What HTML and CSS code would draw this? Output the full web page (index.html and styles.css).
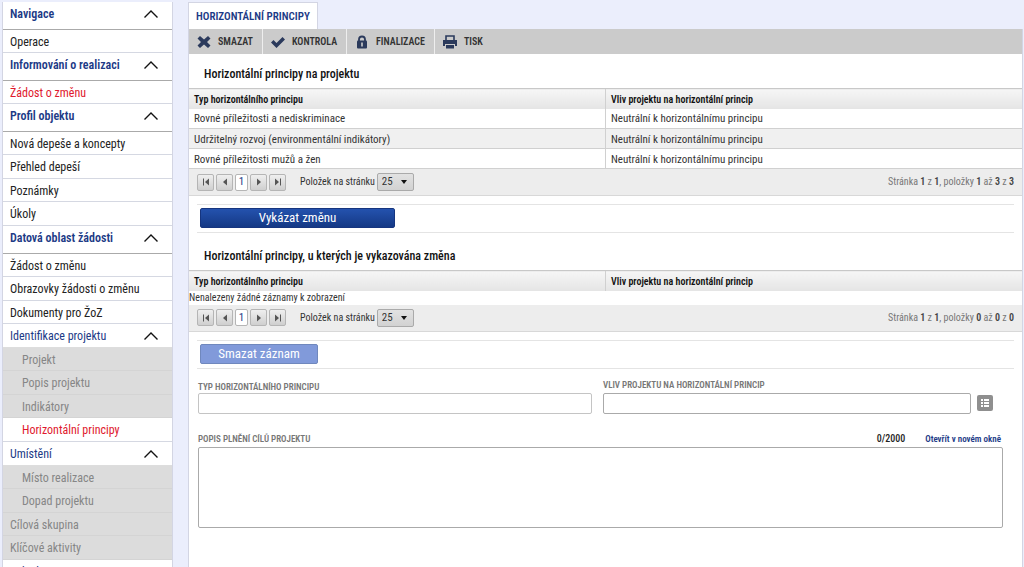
FILE: index.html
```html
<!DOCTYPE html>
<html lang="cs">
<head>
<meta charset="utf-8">
<title>Horizontální principy</title>
<link rel="stylesheet" href="styles.css">
</head>
<body>
<svg class="defs" aria-hidden="true">
  <symbol id="chev" viewBox="0 0 16 10"><path d="M1.500 8.500L8 2l6.500 6.500" fill="none" stroke="#111" stroke-width="1.400"/></symbol>
  <symbol id="first" viewBox="0 0 10 10"><path d="M2 1.500h1v7H2zM8 1.500v7L4 5z" fill="#555"/></symbol>
  <symbol id="prev" viewBox="0 0 10 10"><path d="M7 1.500v7L3 5z" fill="#555"/></symbol>
  <symbol id="next" viewBox="0 0 10 10"><path d="M3 1.500v7L7 5z" fill="#555"/></symbol>
  <symbol id="last" viewBox="0 0 10 10"><path d="M7 1.500h1v7H7zM2 1.500v7L6 5z" fill="#555"/></symbol>
</svg>
<div class="app">
  <nav class="side" aria-label="Navigace">
    <button class="group">Navigace<svg><use href="#chev"/></svg></button>
    <ul class="list"><li><a href="#">Operace</a></li></ul>
    <button class="group">Informování o realizaci<svg><use href="#chev"/></svg></button>
    <ul class="list"><li><a href="#" class="active">Žádost o změnu</a></li></ul>
    <button class="group">Profil objektu<svg><use href="#chev"/></svg></button>
    <ul class="list">
      <li><a href="#">Nová depeše a koncepty</a></li>
      <li><a href="#">Přehled depeší</a></li>
      <li><a href="#">Poznámky</a></li>
      <li><a href="#">Úkoly</a></li>
    </ul>
    <button class="group">Datová oblast žádosti<svg><use href="#chev"/></svg></button>
    <ul class="list">
      <li><a href="#">Žádost o změnu</a></li>
      <li><a href="#">Obrazovky žádosti o změnu</a></li>
      <li><a href="#">Dokumenty pro ŽoZ</a></li>
    </ul>
    <button class="group sub">Identifikace projektu<svg><use href="#chev"/></svg></button>
    <ul class="list nested">
      <li class="off"><a href="#">Projekt</a></li>
      <li class="off"><a href="#">Popis projektu</a></li>
      <li class="off"><a href="#">Indikátory</a></li>
      <li><a href="#" class="active">Horizontální principy</a></li>
    </ul>
    <button class="group sub">Umístění<svg><use href="#chev"/></svg></button>
    <ul class="list nested">
      <li class="off"><a href="#">Místo realizace</a></li>
      <li class="off"><a href="#">Dopad projektu</a></li>
    </ul>
    <ul class="list">
      <li class="off"><a href="#">Cílová skupina</a></li>
      <li class="off"><a href="#">Klíčové aktivity</a></li>
    </ul>
    <button class="group sub">Subjekty</button>
  </nav>

  <main class="main">
    <h1 class="tab">HORIZONTÁLNÍ PRINCIPY</h1>
    <div class="panel">
      <div class="toolbar">
        <button><svg viewBox="0 0 14 14"><path d="M3 1l4 3.500L11 1l2.500 2.500L10 7l3.500 3.500L11 13 7 9.500 3 13 .5 10.500 4 7 .5 3.500z" fill="#2b3a5c"/></svg>SMAZAT</button>
        <button><svg viewBox="0 0 14 14"><path d="M0 7.500L2.500 5 5.500 8l6-6L14 4.500 5.500 13z" fill="#2b3a5c"/></svg>KONTROLA</button>
        <button><svg viewBox="0 0 14 14"><path d="M4 6V4.500a3 3 0 0 1 6 0V6" fill="none" stroke="#2b3a5c" stroke-width="1.800"/><rect x="2" y="5.500" width="10" height="8" rx="1" fill="#2b3a5c"/><path d="M6.200 7.500h1.600v4H6.200z" fill="#ccc"/></svg>FINALIZACE</button>
        <button><svg viewBox="0 0 14 14"><path d="M3 5V1h8v4" fill="none" stroke="#2b3a5c" stroke-width="1.600"/><path d="M0 5h14v6h-2V9H2v2H0zM3 10h8v3.500H3z" fill="#2b3a5c"/></svg>TISK</button>
      </div>

      <h2 class="title">Horizontální principy na projektu</h2>
      <table class="grid">
        <thead><tr><th>Typ horizontálního principu</th><th>Vliv projektu na horizontální princip</th></tr></thead>
        <tbody>
          <tr><td>Rovné příležitosti a nediskriminace</td><td>Neutrální k horizontálnímu principu</td></tr>
          <tr><td>Udržitelný rozvoj (environmentální indikátory)</td><td>Neutrální k horizontálnímu principu</td></tr>
          <tr><td>Rovné příležitosti mužů a žen</td><td>Neutrální k horizontálnímu principu</td></tr>
        </tbody>
      </table>
      <div class="pager">
        <button aria-label="První"><svg><use href="#first"/></svg></button>
        <button aria-label="Předchozí"><svg><use href="#prev"/></svg></button>
        <button class="page">1</button>
        <button aria-label="Další"><svg><use href="#next"/></svg></button>
        <button aria-label="Poslední"><svg><use href="#last"/></svg></button>
        <label for="size1">Položek na stránku</label>
        <span class="select"><select id="size1"><option>25</option></select></span>
        <p>Stránka <b>1</b> z <b>1</b>, položky <b>1</b> až <b>3</b> z <b>3</b></p>
      </div>
      <div class="actions"><button class="wide">Vykázat změnu</button></div>

      <h2 class="title">Horizontální principy, u kterých je vykazována změna</h2>
      <table class="grid">
        <thead><tr><th>Typ horizontálního principu</th><th>Vliv projektu na horizontální princip</th></tr></thead>
        <tbody><tr><td class="empty" colspan="2">Nenalezeny žádné záznamy k zobrazení</td></tr></tbody>
      </table>
      <div class="pager">
        <button aria-label="První"><svg><use href="#first"/></svg></button>
        <button aria-label="Předchozí"><svg><use href="#prev"/></svg></button>
        <button class="page">1</button>
        <button aria-label="Další"><svg><use href="#next"/></svg></button>
        <button aria-label="Poslední"><svg><use href="#last"/></svg></button>
        <label for="size2">Položek na stránku</label>
        <span class="select"><select id="size2"><option>25</option></select></span>
        <p>Stránka <b>1</b> z <b>1</b>, položky <b>0</b> až <b>0</b> z <b>0</b></p>
      </div>
      <div class="actions"><button class="soft">Smazat záznam</button></div>

      <form class="form">
        <div class="fields">
          <div class="field first"><label for="typ">TYP HORIZONTÁLNÍHO PRINCIPU</label><input class="readonly" id="typ" type="text" readonly></div>
          <div class="field second"><label for="vliv">VLIV PROJEKTU NA HORIZONTÁLNÍ PRINCIP</label>
            <div class="combo"><input id="vliv" type="text"><button class="pick" type="button" aria-label="Vybrat"><svg viewBox="0 0 16 16"><path d="M4 4h2v2H4zM7 4h5v2H7zM4 7h2v2H4zM7 7h5v2H7zM4 10h2v2H4zM7 10h5v2H7z" fill="#fff"/></svg></button></div>
          </div>
        </div>
        <div class="caption"><label for="popis">POPIS PLNĚNÍ CÍLŮ PROJEKTU</label><span>0/2000</span><a href="#">Otevřít v novém okně</a></div>
        <textarea id="popis"></textarea>
      </form>
    </div>
  </main>
</div>
</body>
</html>
```
FILE: styles.css
```css
* { box-sizing: border-box; }
html, body { height: 100%; }
body {
  margin: 0;
  overflow: hidden;
  background: #ebeefc;
  color: #222;
  font: 12px/16px "Roboto Condensed", "Liberation Sans Narrow", Roboto, sans-serif;
}
button, input, select, textarea { font: inherit; color: inherit; margin: 0; }
a { color: inherit; text-decoration: none; }
h1, h2, p, ul { margin: 0; padding: 0; }
.defs { position: absolute; width: 0; height: 0; }

.app { display: flex; gap: 15px; min-height: 100%; padding: 2px 1px 0 2px; }

/* Sidebar */
.side { flex: 0 0 171px; background: #fff; border: solid #d3d5e3; border-width: 0 1px; }
.group {
  display: flex;
  align-items: center;
  justify-content: space-between;
  width: 100%;
  height: 28px;
  padding: 0 13px 3px 7px;
  border: 0;
  border-bottom: 1px solid #aaa;
  background: #fff;
  color: #1c3a86;
  font-size: 12px;
  font-weight: 600;
}
.group svg { width: 16px; height: 10px; }
.group.sub { height: 24px; padding-bottom: 0; border-bottom-color: #ddd; font-weight: 400; }
.list { list-style: none; }
.list li { height: 23px; border-bottom: 1px solid #d5d8e2; }
.list li:nth-child(even) { height: 24px; }
.list a { display: block; padding: 0 7px; line-height: 24px; }
.nested a { padding-left: 19px; }
.list .off { background: #dcdcdc; border-color: #d4d4d4; color: #868686; }
.list .active { color: #e0182d; }

/* Main panel */
.main { flex: 1; display: flex; flex-direction: column; align-items: flex-start; min-width: 0; }
.tab {
  padding: 6px 7px 4px;
  border: 1px solid #d3d5e3;
  border-bottom: 0;
  background: #fff;
  color: #1c3a86;
  font-size: 11px;
  line-height: 16px;
  font-weight: 600;
}
.panel { flex: 1; width: 100%; background: #fff; border: solid #d3d5e3; border-width: 0 1px; }

.toolbar { display: flex; background: #cbcbcb; }
.toolbar button {
  display: flex;
  align-items: center;
  gap: 7px;
  height: 25px;
  padding: 0 9px 0 8px;
  border: 0;
  border-right: 1px solid #eee;
  background: none;
  color: #333;
  font-size: 10px;
  font-weight: 600;
}
.toolbar button:last-child { border: 0; }
.toolbar svg { width: 14px; height: 14px; }

.title { padding: 12px 15px 6px; color: #111; font-size: 12px; line-height: 16px; font-weight: 500; }

.grid { width: 100%; table-layout: fixed; border-collapse: collapse; }
.grid th {
  height: 20px;
  padding: 2px 5px 0;
  border-top: 1px solid #c8c8c8;
  background: linear-gradient(#f6f6f6, #e4e4e4);
  color: #111;
  font-size: 10px;
  font-weight: 600;
  text-align: left;
}
.grid td { height: 20px; padding: 2px 5px 0; border-bottom: 1px solid #d0d0d0; color: #333; font-size: 11px; }
.grid th + th, .grid td + td { border-left: 1px solid #d0d0d0; }
.grid tr:nth-child(even) td { background: #f0f0f0; }
.grid .empty { height: 14px; padding: 0; border: 0; font-size: 10px; line-height: 14px; }

.pager {
  display: flex;
  align-items: center;
  gap: 2px;
  height: 27px;
  padding: 0 8px;
  border-bottom: 1px solid #d8d8d8;
  background: #ededed;
  color: #333;
  font-size: 10px;
}
.pager button {
  display: flex;
  align-items: center;
  justify-content: center;
  width: 17px;
  height: 17px;
  padding: 0;
  border: 1px solid #b5b5b5;
  border-radius: 2px;
  background: linear-gradient(#efefef, #cfcfcf);
}
.pager .page { width: 13px; background: #fff; color: #1c3a86; font-size: 11px; }
.pager svg { width: 10px; height: 10px; }
.pager label { margin-left: 12px; }
.pager p { margin-left: auto; color: #777; }
.pager b { color: #444; font-weight: 600; }
.select { position: relative; display: flex; }
.select select {
  appearance: none;
  width: 37px;
  height: 18px;
  padding: 0 4px;
  border: 1px solid #aaa;
  border-radius: 2px;
  background: linear-gradient(#e2e2e2, #d2d2d2);
  font-size: 11px;
  line-height: 16px;
}
.select::after {
  content: "";
  position: absolute;
  top: 7px;
  right: 7px;
  border: solid transparent;
  border-width: 4px 3px 0;
  border-top-color: #111;
  pointer-events: none;
}

.actions { margin: 8px 8px 3px; padding: 3px 3px 4px; border: solid #e4e4e4; border-width: 1px 0; }
.actions button {
  display: block;
  height: 20px;
  padding: 0;
  border: 1px solid #16357f;
  border-radius: 2px;
  background: linear-gradient(#2452ae, #153985);
  color: #fff;
  font-size: 13px;
  line-height: 18px;
}
.actions .wide { width: 195px; }
.actions .soft { width: 118px; border-color: #7088bd; background: #819ada; }

/* Form */
.form { padding: 7px 19px 0 9px; color: #777; font-size: 9px; line-height: 12px; font-weight: 600; }
.fields { display: flex; align-items: flex-end; gap: 11px; }
.field label { display: block; }
.field input { width: 100%; height: 21px; border: 1px solid #aaa; border-radius: 2px; background: #fff; }
.field .readonly { border-color: #c4c4c4; }
.first { flex: 394; }
.second { flex: 400; }
.second label { margin-bottom: 2px; }
.combo { display: flex; align-items: center; gap: 6px; padding-right: 10px; }
.combo input { flex: 1; min-width: 0; }
.pick { width: 16px; height: 16px; padding: 0; border: 0; border-radius: 2px; background: #8f8f8f; }
.pick svg { display: block; width: 16px; height: 16px; }
.caption { display: flex; align-items: center; margin-top: 19px; padding-right: 2px; }
.caption span { margin-left: auto; color: #222; font-size: 10px; font-weight: 500; }
.caption a { margin-left: 20px; color: #1c3a86; }
.form textarea {
  display: block;
  width: 100%;
  height: 81px;
  margin-top: 2px;
  border: 1px solid #aaa;
  border-radius: 2px;
  background: #fff;
  resize: none;
}
```
